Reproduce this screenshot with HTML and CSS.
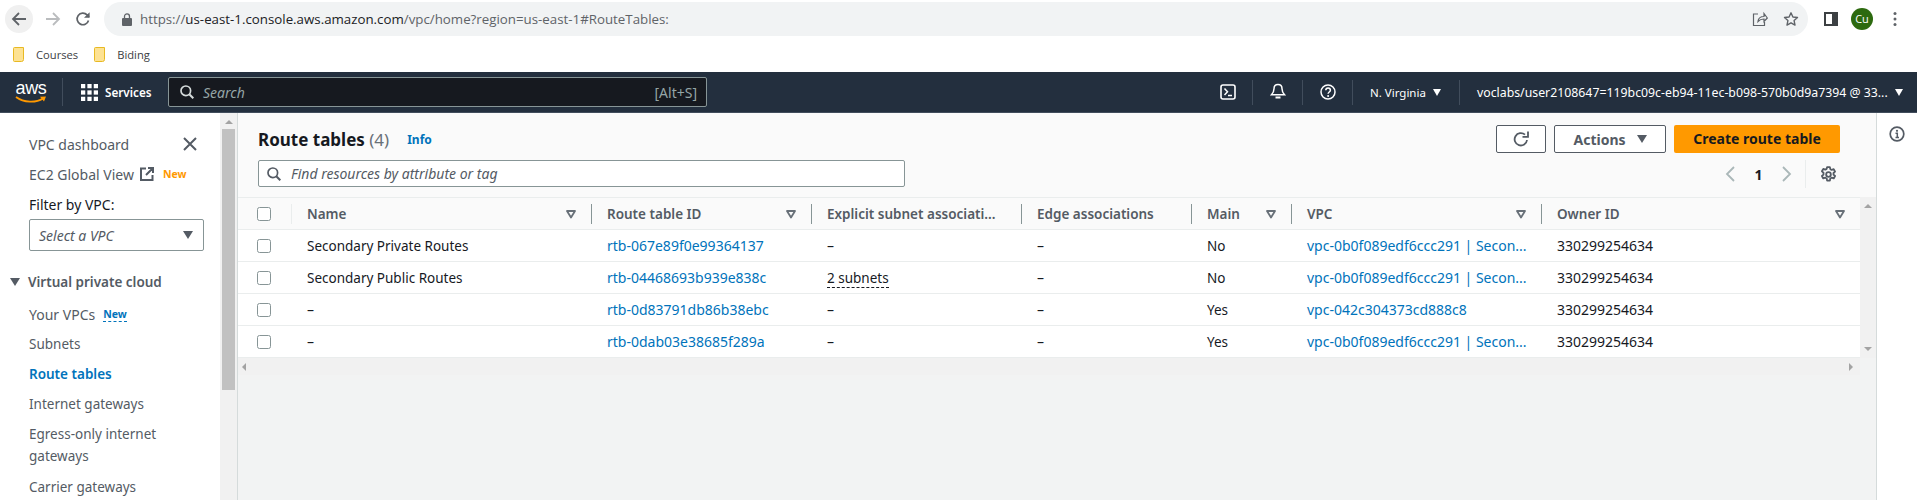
FILE: index.html
```html
<!DOCTYPE html>
<html>
<head>
    <title>Route tables | VPC Console</title>
    <link rel="stylesheet" href="styles.css">
</head>
<body>
    <svg class="defs" width="0" height="0">
        <symbol id="sort" viewBox="0 0 10 10"><path d="M1 2h8L5 8.500z" fill="none" stroke="#687078" stroke-width="1.800" stroke-linejoin="round"/></symbol>
        <symbol id="folder" viewBox="0 0 12 15"><path d="M.5 1.500a1 1 0 0 1 1-1h9v12a2 2 0 0 1-2 2h-7a1 1 0 0 1-1-1z" fill="#fde293" stroke="#e8b923"/></symbol>
        <symbol id="box" viewBox="0 0 14 14"><rect x=".5" y=".5" width="13" height="13" rx="2" fill="#fff" stroke="#879596"/></symbol>
    </svg>

    <!-- browser toolbar -->
    <div class="toolbar">
        <div class="tool-btn back">
            <svg width="16" height="16" viewBox="0 0 16 16"><path d="M15 8H2M8 2 2 8l6 6" fill="none" stroke="#5f6368" stroke-width="1.800"/></svg>
        </div>
        <div class="tool-btn fwd">
            <svg width="16" height="16" viewBox="0 0 16 16"><path d="M1 8h13M8 2l6 6-6 6" fill="none" stroke="#babcbe" stroke-width="1.800"/></svg>
        </div>
        <div class="tool-btn reload">
            <svg width="16" height="16" viewBox="0 0 16 16"><path d="M13.500 9.500a5.800 5.800 0 1 1-1.400-5.600L14 6" fill="none" stroke="#5f6368" stroke-width="1.700"/><path d="M14.600 1.200v5.600H9z" fill="#5f6368"/></svg>
        </div>
        <div class="omnibox">
            <svg class="lock" width="10" height="13" viewBox="0 0 10 13"><path d="M2.500 5V3.400a2.500 2.500 0 0 1 5 0V5" fill="none" stroke="#5f6368" stroke-width="1.300"/><rect y="5" width="10" height="8" rx="1" fill="#5f6368"/></svg>
            <span class="url"><span class="url-dim">https://</span>us-east-1.console.aws.amazon.com<span class="url-dim">/vpc/home?region=us-east-1#RouteTables:</span></span>
            <svg class="share" width="16" height="16" viewBox="0 0 16 16"><path d="M6 3H1.500v11.500h11V11M6 10.500c.3-3 2.500-5 6-5V2.500l3.300 4.500L12 10.500V8c-2.500 0-4.500.8-6 2.500z" fill="none" stroke="#5f6368" stroke-width="1.200"/></svg>
            <svg class="star" width="16" height="16" viewBox="0 0 16 16"><path d="m8 1.800 1.900 4.200 4.600.5-3.400 3.100.9 4.500L8 11.800l-4 2.300.9-4.500L1.500 6.500l4.600-.5z" fill="none" stroke="#5f6368" stroke-width="1.400" stroke-linejoin="round"/></svg>
        </div>
        <svg class="panel-ico" width="14" height="14" viewBox="0 0 14 14"><path d="M1 1h12v12H1z" fill="none" stroke="#3c4043" stroke-width="2"/><path d="M8 1h5v12H8z" fill="#3c4043"/></svg>
        <div class="avatar">Cu</div>
        <svg class="dots" width="4" height="16" viewBox="0 0 4 16"><circle cx="2" cy="2.500" r="1.500" fill="#5f6368"/><circle cx="2" cy="8" r="1.500" fill="#5f6368"/><circle cx="2" cy="13.500" r="1.500" fill="#5f6368"/></svg>
    </div>

    <div class="bookmarks">
        <svg class="bm-ico" width="12" height="15"><use href="#folder"/></svg>
        <span class="bm-text bm-courses">Courses</span>
        <svg class="bm-ico" width="12" height="15"><use href="#folder"/></svg>
        <span class="bm-text">Biding</span>
    </div>

    <!-- aws nav -->
    <div class="nav">
        <div class="logo">
            <span class="logo-text">aws</span>
            <svg class="smile" width="32" height="8" viewBox="0 0 32 8"><path d="M1 1c8 6 20 6 27 1.500" fill="none" stroke="#ff9900" stroke-width="1.800"/><path d="M25 .8 31 .4 29 5.500z" fill="#ff9900"/></svg>
        </div>
        <svg class="grid-ico" width="17" height="17" viewBox="0 0 16 16" fill="#fff">
            <rect width="4" height="4"/><rect x="6" width="4" height="4"/><rect x="12" width="4" height="4"/>
            <rect y="6" width="4" height="4"/><rect x="6" y="6" width="4" height="4"/><rect x="12" y="6" width="4" height="4"/>
            <rect y="12" width="4" height="4"/><rect x="6" y="12" width="4" height="4"/><rect x="12" y="12" width="4" height="4"/>
        </svg>
        <span class="services">Services</span>
        <div class="nav-search">
            <svg width="14" height="14" viewBox="0 0 14 14"><circle cx="5.800" cy="5.800" r="4.800" fill="none" stroke="#d5dbdb" stroke-width="1.700"/><path d="m9.300 9.300 4 4" stroke="#d5dbdb" stroke-width="2"/></svg>
            <span class="nav-search-text">Search</span>
            <span class="nav-search-key">[Alt+S]</span>
        </div>
        <div class="nav-cell nav-term">
            <svg width="16" height="16" viewBox="0 0 16 16"><rect x="1" y="1" width="14" height="14" rx="2" fill="none" stroke="#fff" stroke-width="1.600"/><path d="m4.500 4.500 3 3.300-3 3.200M8 11.500h4" fill="none" stroke="#fff" stroke-width="1.500"/></svg>
        </div>
        <div class="nav-cell">
            <svg width="16" height="18" viewBox="0 0 16 18"><path d="M8 1.500c-2.500 0-4 1.800-4 4.200 0 3-1 4.300-2.500 6h13c-1.500-1.700-2.500-3-2.500-6 0-2.400-1.500-4.200-4-4.200z" fill="none" stroke="#fff" stroke-width="1.500"/><path d="M5.500 14.500h5" stroke="#fff" stroke-width="2"/></svg>
        </div>
        <div class="nav-cell">
            <svg width="16" height="16" viewBox="0 0 16 16"><circle cx="8" cy="8" r="7" fill="none" stroke="#fff" stroke-width="1.500"/><path d="M5.800 6.200c0-3 4.600-3 4.600 0 0 1.800-2.300 1.800-2.300 3.600" fill="none" stroke="#fff" stroke-width="1.500"/><circle cx="8.100" cy="12" r="1" fill="#fff"/></svg>
        </div>
        <div class="nav-region">N. Virginia<i class="caret-white"></i></div>
        <div class="nav-user">voclabs/user2108647=119bc09c-eb94-11ec-b098-570b0d9a7394 @ 33...<i class="caret-white"></i></div>
    </div>

    <div class="workspace">
        <div class="sidebar">
            <div class="side-top">
                <a class="side-link">VPC dashboard</a>
                <svg class="side-close" width="14" height="14" viewBox="0 0 14 14"><path d="m1 1 12 12M13 1 1 13" stroke="#545b64" stroke-width="2"/></svg>
            </div>
            <div class="side-row">
                <a class="side-link">EC2 Global View</a>
                <svg class="ext-ico" width="14" height="14" viewBox="0 0 14 14"><path d="M6 1.500H1v11.500h11.500V8M8 1h5v5M13 1 6 8" fill="none" stroke="#545b64" stroke-width="2"/></svg>
                <span class="new-orange">New</span>
            </div>
            <div class="side-filter">Filter by VPC:</div>
            <div class="side-select">
                <span>Select a VPC</span>
                <i class="caret-grey"></i>
            </div>
            <div class="side-head"><i class="caret-grey caret-head"></i>Virtual private cloud</div>
            <div class="side-row side-vpcs">
                <a class="side-link">Your VPCs</a>
                <span class="new-blue">New</span>
            </div>
            <a class="side-item">Subnets</a>
            <a class="side-item side-active">Route tables</a>
            <a class="side-item">Internet gateways</a>
            <a class="side-item side-wrap">Egress-only internet gateways</a>
            <a class="side-item">Carrier gateways</a>
        </div>

        <div class="vbar vbar-left">
            <i class="arrow-up"></i>
            <div class="vthumb"></div>
        </div>

        <div class="main">
            <div class="head">
                <div class="head-row">
                    <div class="title"><b>Route tables</b> <span class="count">(4)</span></div>
                    <span class="info-link">Info</span>
                    <div class="actions">
                        <div class="btn btn-icon">
                            <svg width="16" height="16" viewBox="0 0 16 16"><path d="M14 9a6.200 6.200 0 1 1-2-5.300" fill="none" stroke="#545b64" stroke-width="1.800"/><path d="M9.500 5.800H15V.5" fill="none" stroke="#545b64" stroke-width="1.800"/></svg>
                        </div>
                        <div class="btn btn-actions">Actions<i class="caret-grey"></i></div>
                        <div class="btn-primary">Create route table</div>
                    </div>
                </div>
                <div class="head-row head-row2">
                    <div class="find">
                        <svg width="14" height="14" viewBox="0 0 14 14"><circle cx="5.800" cy="5.800" r="4.800" fill="none" stroke="#545b64" stroke-width="1.700"/><path d="m9.300 9.300 4 4" stroke="#545b64" stroke-width="2"/></svg>
                        <span>Find resources by attribute or tag</span>
                    </div>
                    <div class="pager">
                        <svg width="10" height="16" viewBox="0 0 10 16"><path d="M9 1 2 8l7 7" fill="none" stroke="#aab7b8" stroke-width="1.800"/></svg>
                        <b>1</b>
                        <svg width="10" height="16" viewBox="0 0 10 16"><path d="m1 1 7 7-7 7" fill="none" stroke="#aab7b8" stroke-width="1.800"/></svg>
                        <div class="pager-gear">
                            <svg width="17" height="17" viewBox="0 0 16 16"><circle cx="8" cy="8" r="2.200" fill="none" stroke="#545b64" stroke-width="1.700"/><path d="M6.700 1h2.600l.4 2 1.300.7 1.900-.7 1.300 2.300-1.500 1.300v1.500l1.500 1.300-1.300 2.300-1.900-.7-1.300.7-.4 2H6.700l-.4-2-1.300-.7-1.900.7-1.300-2.300 1.500-1.300V6.300L1.800 5l1.300-2.300 1.900.7 1.300-.7z" fill="none" stroke="#545b64" stroke-width="1.700" stroke-linejoin="round"/></svg>
                        </div>
                    </div>
                </div>
            </div>

            <div class="table-wrap">
                <table class="rt">
                    <colgroup>
                        <col class="c-check"><col class="c-name"><col class="c-id"><col class="c-sub"><col class="c-edge"><col class="c-main"><col class="c-vpc"><col class="c-owner">
                    </colgroup>
                    <thead>
                        <tr>
                            <th><div class="box-cell"><svg width="14" height="14"><use href="#box"/></svg></div></th>
                            <th><div class="th-in th-first">Name<svg width="10" height="10"><use href="#sort"/></svg></div></th>
                            <th><div class="th-in">Route table ID<svg width="10" height="10"><use href="#sort"/></svg></div></th>
                            <th><div class="th-in"><span class="ell">Explicit subnet associati...</span></div></th>
                            <th><div class="th-in">Edge associations</div></th>
                            <th><div class="th-in">Main<svg width="10" height="10"><use href="#sort"/></svg></div></th>
                            <th><div class="th-in">VPC<svg width="10" height="10"><use href="#sort"/></svg></div></th>
                            <th><div class="th-in">Owner ID<svg width="10" height="10"><use href="#sort"/></svg></div></th>
                        </tr>
                    </thead>
                    <tbody>
                        <tr>
                            <td><div class="box-cell"><svg width="14" height="14"><use href="#box"/></svg></div></td>
                            <td class="td-text">Secondary Private Routes</td>
                            <td><a>rtb-067e89f0e99364137</a></td>
                            <td>–</td><td>–</td><td class="td-text">No</td>
                            <td><a>vpc-0b0f089edf6ccc291 | Secon...</a></td>
                            <td>330299254634</td>
                        </tr>
                        <tr>
                            <td><div class="box-cell"><svg width="14" height="14"><use href="#box"/></svg></div></td>
                            <td class="td-text">Secondary Public Routes</td>
                            <td><a>rtb-04468693b939e838c</a></td>
                            <td class="td-text"><span class="dashed">2 subnets</span></td><td>–</td><td class="td-text">No</td>
                            <td><a>vpc-0b0f089edf6ccc291 | Secon...</a></td>
                            <td>330299254634</td>
                        </tr>
                        <tr>
                            <td><div class="box-cell"><svg width="14" height="14"><use href="#box"/></svg></div></td>
                            <td>–</td>
                            <td><a>rtb-0d83791db86b38ebc</a></td>
                            <td>–</td><td>–</td><td class="td-text">Yes</td>
                            <td><a>vpc-042c304373cd888c8</a></td>
                            <td>330299254634</td>
                        </tr>
                        <tr>
                            <td><div class="box-cell"><svg width="14" height="14"><use href="#box"/></svg></div></td>
                            <td>–</td>
                            <td><a>rtb-0dab03e38685f289a</a></td>
                            <td>–</td><td>–</td><td class="td-text">Yes</td>
                            <td><a>vpc-0b0f089edf6ccc291 | Secon...</a></td>
                            <td>330299254634</td>
                        </tr>
                    </tbody>
                </table>
                <div class="vbar vbar-right">
                    <i class="arrow-up"></i>
                    <i class="arrow-down"></i>
                </div>
            </div>
            <div class="hbar">
                <i class="arrow-left"></i>
                <i class="arrow-right"></i>
            </div>
        </div>

        <div class="rail">
            <svg width="16" height="16" viewBox="0 0 16 16"><circle cx="8" cy="8" r="6.800" fill="none" stroke="#545b64" stroke-width="1.700"/><path d="M6.500 7.200H8.300V11.500M6.500 11.500H10" fill="none" stroke="#545b64" stroke-width="1.500"/><circle cx="8" cy="4.800" r="1.100" fill="#545b64"/></svg>
        </div>
    </div>
</body>
</html>
```

FILE: styles.css
```css
html, body{
    margin:0;
    height:500px;
    overflow:hidden;
}
body{
    display:flex;
    flex-direction:column;
    background-color:#ffffff;
    font-family:"Noto Sans", "Open Sans", sans-serif;
    font-size:14px;
    color:#16191f;
}
.defs{
    position:absolute;
}
i{
    display:block;
    flex:none;
}

/* browser chrome */
.toolbar{
    display:flex;
    align-items:center;
    height:38px;
    padding-bottom:2px;
    flex:none;
}
.tool-btn{
    display:flex;
    align-items:center;
    justify-content:center;
    flex:none;
    width:28px;
    height:28px;
    border-radius:50%;
}
.back{
    margin-left:5px;
    background-color:#f0f0f0;
}
.fwd{
    margin-left:6px;
}
.reload{
    margin-left:2px;
}
.omnibox{
    display:flex;
    align-items:center;
    flex:none;
    width:1704px;
    height:34px;
    margin-left:7px;
    border-radius:17px;
    background-color:#f1f3f4;
    box-sizing:border-box;
    padding-left:18px;
}
.url{
    margin-left:8px;
    font-family:"Open Sans", sans-serif;
    font-size:13.300px;
    color:#202124;
}
.url-dim{
    color:#5f6368;
}
.share{
    margin-left:auto;
}
.star{
    margin-left:15px;
    margin-right:9px;
}
.panel-ico{
    flex:none;
    margin-left:16px;
}
.avatar{
    flex:none;
    width:22px;
    height:22px;
    margin-left:13px;
    border-radius:50%;
    background-color:#2d6a0f;
    color:#ffffff;
    font-family:"Open Sans", sans-serif;
    font-size:11px;
    line-height:22px;
    text-align:center;
}
.dots{
    flex:none;
    margin-left:20px;
}
.bookmarks{
    display:flex;
    align-items:center;
    height:32px;
    box-sizing:border-box;
    padding:0 0 4px 13px;
    flex:none;
    font-family:"Open Sans", sans-serif;
    font-size:11.200px;
    color:#3c4043;
}
.bm-text{
    margin-left:11px;
}
.bm-courses{
    margin-right:16px;
}

/* aws nav */
.nav{
    display:flex;
    align-items:center;
    flex:none;
    height:40px;
    background-color:#232f3e;
    border-bottom:1px solid #414d5c;
    color:#ffffff;
    font-size:12.300px;
}
.logo{
    display:flex;
    flex-direction:column;
    align-items:center;
    width:62px;
    height:28px;
    border-right:1px solid #414d5c;
}
.logo-text{
    height:16px;
    padding-top:2px;
    font-family:"Liberation Sans", sans-serif;
    font-size:18px;
    letter-spacing:-0.3px;
    line-height:17px;
}
.grid-ico{
    flex:none;
    margin-left:18px;
}
.services{
    flex:none;
    margin-left:7px;
    width:63px;
    font-size:11.700px;
    font-weight:600;
}
.nav-search{
    display:flex;
    align-items:center;
    flex:none;
    width:539px;
    height:30px;
    box-sizing:border-box;
    padding:0 9px 0 11px;
    background-color:#16191f;
    border:1px solid #879596;
    border-radius:2px;
    font-size:14px;
}
.nav-search-text{
    margin-left:9px;
    font-style:italic;
    color:#95a5a6;
}
.nav-search-key{
    margin-left:auto;
    color:#95a5a6;
}
.nav-cell{
    display:flex;
    align-items:center;
    justify-content:center;
    flex:none;
    width:49px;
    height:25px;
    border-right:1px solid #414d5c;
}
.nav-term{
    margin-left:496px;
}
.nav-region{
    display:flex;
    align-items:center;
    flex:none;
    width:89px;
    height:25px;
    padding-left:17px;
    border-right:1px solid #414d5c;
    font-size:11.500px;
}
.nav-user{
    display:flex;
    align-items:center;
    padding-left:17px;
    white-space:nowrap;
}
.caret-white{
    width:0;
    height:0;
    margin-left:7px;
    border-left:4.500px solid transparent;
    border-right:4.500px solid transparent;
    border-top:7px solid #ffffff;
}

/* sidebar */
.workspace{
    display:flex;
    flex:1;
    min-height:0;
}
.sidebar{
    flex:none;
    width:220px;
    box-sizing:border-box;
    padding:21px 16px 0 29px;
    color:#545b64;
}
.side-top{
    display:flex;
    align-items:center;
    justify-content:space-between;
    height:20px;
}
.side-close{
    margin-right:7px;
}
.side-row{
    display:flex;
    align-items:center;
    height:20px;
    margin-top:10px;
}
.ext-ico{
    margin-left:6px;
}
.new-orange{
    margin-left:9px;
    font-size:10.500px;
    font-weight:700;
    color:#ff9900;
}
.side-filter{
    margin-top:11px;
    line-height:20px;
    color:#16191f;
}
.side-select{
    display:flex;
    align-items:center;
    justify-content:space-between;
    height:32px;
    margin-top:4px;
    box-sizing:border-box;
    padding:0 10px 0 9px;
    border:1px solid #879596;
    border-radius:2px;
    font-style:italic;
}
.caret-grey{
    width:0;
    height:0;
    border-left:5.500px solid transparent;
    border-right:5.500px solid transparent;
    border-top:8px solid #545b64;
}
.side-head{
    display:flex;
    align-items:center;
    height:20px;
    margin:21px 0 0 -19px;
    font-size:13.500px;
    font-weight:600;
}
.caret-head{
    margin-right:8px;
}
.side-vpcs{
    margin-top:12px;
}
.new-blue{
    margin-left:8px;
    font-size:10.500px;
    font-weight:700;
    color:#0073bb;
    border-bottom:1px dashed #0073bb;
    line-height:14px;
}
.side-item{
    display:block;
    margin-top:10px;
    font-size:13.500px;
    line-height:20px;
}
.side-active{
    font-weight:600;
    color:#0073bb;
}
.side-wrap{
    line-height:22px;
    margin-top:9px;
}

/* fake scrollbars */
.vbar{
    display:flex;
    flex-direction:column;
    align-items:center;
    flex:none;
    box-sizing:border-box;
    background-color:#f1f1f1;
}
.vbar-left{
    width:18px;
    padding-top:7px;
    border-right:1px solid #d5dbdb;
}
.vthumb{
    width:13px;
    height:261px;
    margin-top:5px;
    background-color:#c1c1c1;
}
.vbar-right{
    width:16px;
    padding:7px 0;
    justify-content:space-between;
}
.arrow-up, .arrow-down{
    width:0;
    height:0;
    border-left:4px solid transparent;
    border-right:4px solid transparent;
}
.arrow-up{
    border-bottom:4px solid #a3a3a3;
}
.arrow-down{
    border-top:4px solid #a3a3a3;
}
.arrow-left, .arrow-right{
    width:0;
    height:0;
    border-top:4px solid transparent;
    border-bottom:4px solid transparent;
}
.arrow-left{
    border-right:4px solid #a3a3a3;
}
.arrow-right{
    border-left:4px solid #a3a3a3;
}
.hbar{
    display:flex;
    align-items:center;
    justify-content:space-between;
    width:1622px;
    height:17px;
    box-sizing:border-box;
    padding:0 7px 0 4px;
    background-color:#f1f1f1;
}

/* main */
.main{
    flex:none;
    width:1638px;
    background-color:#f2f3f3;
}
.head{
    height:84px;
    box-sizing:border-box;
    padding:12px 36px 0 20px;
    background-color:#fafafa;
}
.head-row{
    display:flex;
    align-items:center;
    height:28px;
}
.title{
    font-size:17px;
}
.title b{
    font-weight:700;
}
.count{
    color:#687078;
}
.info-link{
    margin-left:18px;
    font-size:12px;
    font-weight:700;
    color:#0073bb;
}
.actions{
    display:flex;
    margin-left:auto;
    gap:8px;
}
.btn{
    display:flex;
    align-items:center;
    justify-content:center;
    height:28px;
    box-sizing:border-box;
    border:1px solid #545b64;
    border-radius:2px;
    background-color:#ffffff;
    font-size:14px;
    font-weight:700;
    color:#545b64;
}
.btn-icon{
    width:50px;
}
.btn-actions{
    width:112px;
    gap:11px;
}
.btn-primary{
    width:166px;
    height:28px;
    border-radius:2px;
    background-color:#ff9900;
    font-weight:700;
    line-height:28px;
    text-align:center;
}
.head-row2{
    align-items:flex-start;
    margin-top:7px;
}
.find{
    display:flex;
    align-items:center;
    width:647px;
    height:27px;
    box-sizing:border-box;
    padding-left:8px;
    background-color:#ffffff;
    border:1px solid #879596;
    border-radius:2px;
    color:#545b64;
    font-style:italic;
}
.find span{
    margin-left:10px;
}
.pager{
    display:flex;
    align-items:center;
    margin-left:auto;
    margin-right:3px;
    height:28px;
}
.pager b{
    width:47px;
    text-align:center;
}
.pager-gear{
    display:flex;
    align-items:center;
    height:28px;
    margin-left:13px;
    padding-left:14px;
    border-left:1px solid #eaeded;
}

/* table */
.table-wrap{
    display:flex;
}
.rt{
    flex:none;
    width:1622px;
    table-layout:fixed;
    border-collapse:collapse;
    background-color:#ffffff;
}
.c-check{ width:53px; }
.c-name{ width:300px; }
.c-id{ width:220px; }
.c-sub{ width:210px; }
.c-edge{ width:170px; }
.c-main{ width:100px; }
.c-vpc{ width:250px; }
.c-owner{ width:319px; }
.rt th{
    height:31px;
    padding:0;
    background-color:#fafafa;
    border-top:1px solid #eaeded;
    border-bottom:1px solid #eaeded;
    font-size:13.500px;
    font-weight:600;
    color:#545b64;
    text-align:left;
}
.th-in{
    display:flex;
    align-items:center;
    justify-content:space-between;
    height:20px;
    padding:0 15px;
    border-left:1px solid #879596;
}
.th-first{
    border-left-color:#eaeded;
}
.ell{
    white-space:nowrap;
}
.rt td{
    height:31px;
    padding:0 0 0 16px;
    border-bottom:1px solid #eaeded;
    white-space:nowrap;
    overflow:hidden;
}
.rt td:first-child{
    padding:0;
}
.rt .td-text{
    font-size:13.500px;
}
.box-cell{
    display:flex;
    padding-left:19px;
}
.rt a{
    color:#0073bb;
}
.dashed{
    border-bottom:1px dashed #16191f;
}

/* right rail */
.rail{
    flex:1;
    box-sizing:border-box;
    padding:13px 0 0 12px;
    border-left:1px solid #d5dbdb;
}
```
